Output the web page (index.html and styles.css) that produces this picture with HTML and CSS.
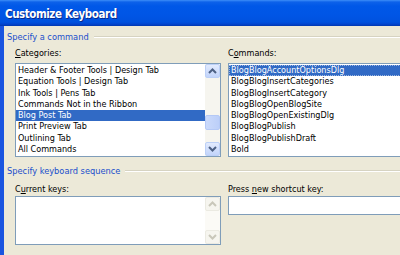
FILE: index.html
```html
<!DOCTYPE html>
<html>
<head>
<meta charset="utf-8">
<link rel="stylesheet" href="styles.css">
</head>
<body>
<div class="win">
  <div class="titlebar"><span class="title">Customize Keyboard</span></div>
  <div class="body">
    <div class="group-head"><span class="gtext">Specify a command</span><div class="rule"></div></div>
    <div class="cols">
      <div class="col left">
        <div class="label"><u>C</u>ategories:</div>
        <div class="listbox cats">
          <div class="items">
            <div class="item">Header &amp; Footer Tools | Design Tab</div>
            <div class="item">Equation Tools | Design Tab</div>
            <div class="item">Ink Tools | Pens Tab</div>
            <div class="item">Commands Not in the Ribbon</div>
            <div class="item sel">Blog Post Tab</div>
            <div class="item">Print Preview Tab</div>
            <div class="item">Outlining Tab</div>
            <div class="item">All Commands</div>
          </div>
          <div class="vscroll">
            <div class="sbtn"><svg width="9" height="6" viewBox="0 0 9 6"><path d="M1 5 L4.5 1.5 L8 5" fill="none" stroke="#4d6185" stroke-width="2"/></svg></div>
            <div class="track"><div class="thumb"></div></div>
            <div class="sbtn"><svg width="9" height="6" viewBox="0 0 9 6"><path d="M1 1 L4.5 4.5 L8 1" fill="none" stroke="#4d6185" stroke-width="2"/></svg></div>
          </div>
        </div>
      </div>
      <div class="col right">
        <div class="label">C<u>o</u>mmands:</div>
        <div class="listbox cmds">
          <div class="items">
            <div class="item sel">BlogBlogAccountOptionsDlg</div>
            <div class="item">BlogBlogInsertCategories</div>
            <div class="item">BlogBlogInsertCategory</div>
            <div class="item">BlogBlogOpenBlogSite</div>
            <div class="item">BlogBlogOpenExistingDlg</div>
            <div class="item">BlogBlogPublish</div>
            <div class="item">BlogBlogPublishDraft</div>
            <div class="item">Bold</div>
          </div>
        </div>
      </div>
    </div>
    <div class="group-head second"><span class="gtext">Specify keyboard sequence</span><div class="rule"></div></div>
    <div class="cols">
      <div class="col left">
        <div class="label">C<u>u</u>rrent keys:</div>
        <div class="listbox keys">
          <div class="items"></div>
          <div class="vscroll disabled">
            <div class="sbtn"><svg width="9" height="6" viewBox="0 0 9 6"><path d="M1 5 L4.5 1.5 L8 5" fill="none" stroke="#c9c7ba" stroke-width="2"/></svg></div>
            <div class="track"></div>
            <div class="sbtn"><svg width="9" height="6" viewBox="0 0 9 6"><path d="M1 1 L4.5 4.5 L8 1" fill="none" stroke="#c9c7ba" stroke-width="2"/></svg></div>
          </div>
        </div>
      </div>
      <div class="col right">
        <div class="label">Press <u>n</u>ew shortcut key:</div>
        <div class="input"></div>
      </div>
    </div>
  </div>
</div>
</body>
</html>
```

FILE: styles.css
```css
* { box-sizing: border-box; }
html, body { margin: 0; padding: 0; }
body {
  width: 400px;
  height: 255px;
  overflow: hidden;
  background: #ece9d8;
  font-family: "DejaVu Sans Condensed", "Liberation Sans", Arial, sans-serif;
  font-size: 9px;
  color: #000;
}
.win {
  width: 400px;
  height: 255px;
  display: flex;
  flex-direction: column;
}
.titlebar {
  height: 26px;
  flex: none;
  display: flex;
  align-items: center;
  padding-left: 5px;
  background: linear-gradient(to bottom, #3d8ef8 0px, #0d62ea 2px, #0058e8 6px, #0055e5 16px, #0052de 22px, #0346d0 24px, #0238b0 26px);
}
.title {
  color: #fff;
  font-family: "DejaVu Sans Condensed", "Liberation Sans Narrow", "Liberation Sans", sans-serif;
  font-weight: bold;
  font-size: 11.5px;
  letter-spacing: -0.45px;
  text-shadow: 1px 1px 0 #0a2a8a;
  margin-top: 2px;
}
.body {
  flex: 1;
  border-left: 4px solid #1a55e0;
  padding: 5px 0 0 3px;
  overflow: hidden;
}
.group-head {
  display: flex;
  align-items: center;
  height: 12px;
  line-height: 12px;
}
.group-head.second { margin-top: 8px; }
.gtext {
  color: #1a4fcc;
  font-size: 9.2px;
  white-space: nowrap;
  padding-right: 5px;
}
.rule {
  flex: 1;
  height: 2px;
  border-top: 1px solid #d6d3c2;
  border-bottom: 1px solid #fff;
}
.cols {
  display: flex;
  gap: 7px;
  margin-left: 8px;
}
.col.left { width: 206px; flex: none; }
.col.right { width: 200px; flex: none; }
.label {
  height: 12px;
  line-height: 12px;
  margin-top: 4px;
  margin-bottom: 4px;
  white-space: nowrap;
}
.second + .cols .label { margin-top: 6px; margin-bottom: 1px; }
.listbox {
  border: 1px solid #7f9db9;
  background: #fff;
  display: flex;
  height: 94px;
}
.listbox.keys { height: 49px; }
.items {
  flex: 1;
  padding-top: 1px;
  min-width: 0;
}
.item {
  height: 11.3px;
  line-height: 11.3px;
  padding-left: 2px;
  white-space: nowrap;
}
.item.sel {
  background: #316ac5;
  color: #fff;
}
.cmds .item.sel { outline: 1px dotted #9cb6e0; outline-offset: -1px; }
.vscroll {
  width: 15px;
  flex: none;
  display: flex;
  flex-direction: column;
  background: #f6f5ef;
}
.sbtn {
  height: 14px;
  flex: none;
  border: 1px solid #bcd0f7;
  border-radius: 2px;
  background: linear-gradient(to bottom, #e2ebfe, #c2d4fa);
  display: flex;
  align-items: center;
  justify-content: center;
}
.track {
  flex: 1;
  position: relative;
}
.thumb {
  position: absolute;
  left: 0;
  right: 0;
  top: 37px;
  height: 15px;
  border: 1px solid #b5c9f6;
  border-radius: 2px;
  background: linear-gradient(to right, #cbdafb, #bccff9);
}
.vscroll.disabled { background: #fbfaf6; }
.vscroll.disabled .sbtn {
  border-color: #ebeae2;
  background: #f6f5ef;
}
.input {
  height: 19px;
  border: 1px solid #7f9db9;
  background: #fff;
}
```
